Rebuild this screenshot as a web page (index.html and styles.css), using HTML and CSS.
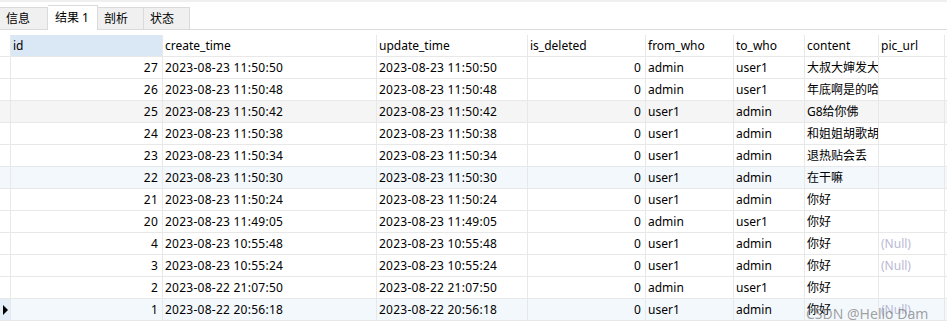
FILE: index.html
```html
<!DOCTYPE html>
<html lang="zh-CN">
<head>
  <meta charset="UTF-8" />
  <title>结果 1</title>
  <link rel="stylesheet" href="styles.css">
</head>
<body>

  <div class="top-strip"></div>

  <div class="tabs">
    <div class="tab">信息</div>
    <div class="tab active">结果 1</div>
    <div class="tab">剖析</div>
    <div class="tab">状态</div>
  </div>

  <div class="grid">
    <div class="row head">
      <div class="gutter"></div>
      <div class="cell sel">id</div>
      <div class="cell">create_time</div>
      <div class="cell">update_time</div>
      <div class="cell">is_deleted</div>
      <div class="cell">from_who</div>
      <div class="cell">to_who</div>
      <div class="cell">content</div>
      <div class="cell last">pic_url</div>
    </div>

    <div class="row">
      <div class="gutter"></div>
      <div class="cell num">27</div><div class="cell date">2023-08-23 11:50:50</div><div class="cell date">2023-08-23 11:50:50</div>
      <div class="cell num">0</div><div class="cell">admin</div><div class="cell">user1</div>
      <div class="cell">大叔大婶发大</div><div class="cell last"></div>
    </div>
    <div class="row">
      <div class="gutter"></div>
      <div class="cell num">26</div><div class="cell date">2023-08-23 11:50:48</div><div class="cell date">2023-08-23 11:50:48</div>
      <div class="cell num">0</div><div class="cell">admin</div><div class="cell">user1</div>
      <div class="cell">年底啊是的哈</div><div class="cell last"></div>
    </div>
    <div class="row grey">
      <div class="gutter"></div>
      <div class="cell num">25</div><div class="cell date">2023-08-23 11:50:42</div><div class="cell date">2023-08-23 11:50:42</div>
      <div class="cell num">0</div><div class="cell">user1</div><div class="cell">admin</div>
      <div class="cell">G8给你佛</div><div class="cell last"></div>
    </div>
    <div class="row">
      <div class="gutter"></div>
      <div class="cell num">24</div><div class="cell date">2023-08-23 11:50:38</div><div class="cell date">2023-08-23 11:50:38</div>
      <div class="cell num">0</div><div class="cell">user1</div><div class="cell">admin</div>
      <div class="cell">和姐姐胡歌胡</div><div class="cell last"></div>
    </div>
    <div class="row">
      <div class="gutter"></div>
      <div class="cell num">23</div><div class="cell date">2023-08-23 11:50:34</div><div class="cell date">2023-08-23 11:50:34</div>
      <div class="cell num">0</div><div class="cell">user1</div><div class="cell">admin</div>
      <div class="cell">退热贴会丢</div><div class="cell last"></div>
    </div>
    <div class="row blue">
      <div class="gutter"></div>
      <div class="cell num">22</div><div class="cell date">2023-08-23 11:50:30</div><div class="cell date">2023-08-23 11:50:30</div>
      <div class="cell num">0</div><div class="cell">user1</div><div class="cell">admin</div>
      <div class="cell">在干嘛</div><div class="cell last"></div>
    </div>
    <div class="row">
      <div class="gutter"></div>
      <div class="cell num">21</div><div class="cell date">2023-08-23 11:50:24</div><div class="cell date">2023-08-23 11:50:24</div>
      <div class="cell num">0</div><div class="cell">user1</div><div class="cell">admin</div>
      <div class="cell">你好</div><div class="cell last"></div>
    </div>
    <div class="row">
      <div class="gutter"></div>
      <div class="cell num">20</div><div class="cell date">2023-08-23 11:49:05</div><div class="cell date">2023-08-23 11:49:05</div>
      <div class="cell num">0</div><div class="cell">admin</div><div class="cell">user1</div>
      <div class="cell">你好</div><div class="cell last"></div>
    </div>
    <div class="row">
      <div class="gutter"></div>
      <div class="cell num">4</div><div class="cell date">2023-08-23 10:55:48</div><div class="cell date">2023-08-23 10:55:48</div>
      <div class="cell num">0</div><div class="cell">user1</div><div class="cell">admin</div>
      <div class="cell">你好</div><div class="cell last null">(Null)</div>
    </div>
    <div class="row">
      <div class="gutter"></div>
      <div class="cell num">3</div><div class="cell date">2023-08-23 10:55:24</div><div class="cell date">2023-08-23 10:55:24</div>
      <div class="cell num">0</div><div class="cell">user1</div><div class="cell">admin</div>
      <div class="cell">你好</div><div class="cell last null">(Null)</div>
    </div>
    <div class="row">
      <div class="gutter"></div>
      <div class="cell num">2</div><div class="cell date">2023-08-22 21:07:50</div><div class="cell date">2023-08-22 21:07:50</div>
      <div class="cell num">0</div><div class="cell">admin</div><div class="cell">user1</div>
      <div class="cell">你好</div><div class="cell last"></div>
    </div>
    <div class="row blue current">
      <div class="gutter"><span class="arrow"></span></div>
      <div class="cell num">1</div><div class="cell date">2023-08-22 20:56:18</div><div class="cell date">2023-08-22 20:56:18</div>
      <div class="cell num">0</div><div class="cell">user1</div><div class="cell">admin</div>
      <div class="cell">你好</div><div class="cell last null">(Null)</div>
    </div>

    <div class="watermark">CSDN @Hello Dam</div>
  </div>

</body>
</html>
```

FILE: styles.css
```css
body {
  margin: 0;
  background: #ffffff;
  font-family: 'Noto Sans', 'Noto Sans CJK SC', sans-serif;
  font-size: 12px;
  color: #000;
}

.top-strip {
  height: 2px;
  background: #efefef;
}

.tabs {
  display: flex;
  align-items: flex-end;
  height: 27px;
  border-bottom: 1px solid #dadada;
}

.tab {
  height: 22px;
  line-height: 22px;
  padding: 0 6px;
  width: 46px;
  box-sizing: border-box;
  background: #f0f0f0;
  border: 1px solid #dadada;
  border-bottom: none;
  border-left: none;
}

.tab:first-child {
  width: 48px;
}

.tab.active {
  width: 50px;
  height: 25px;
  line-height: 24px;
  margin-bottom: -1px;
  background: #ffffff;
  padding-left: 7px;
}

.grid {
  position: relative;
  margin-top: 5px;
}

.row {
  display: grid;
  grid-template-columns: 10px 152px 214px 151px 118px 88px 71px 74px 67px;
  height: 22px;
  border-bottom: 1px solid #e8e8e8;
  box-sizing: border-box;
}

.row.grey {
  background: #f5f5f5;
}

.row.blue {
  background: #f3f8fd;
}

.gutter {
  position: relative;
}

.row.current .gutter {
  background: #e4eef8;
}

.cell {
  border-left: 1px solid #e8e8e8;
  padding: 0 2px;
  line-height: 21px;
  white-space: nowrap;
  overflow: hidden;
}

.cell.last {
  border-right: 1px solid #e8e8e8;
}

.cell.sel {
  background: #dae8f5;
}

.cell.num {
  text-align: right;
  padding-right: 4px;
  letter-spacing: 0.2px;
}

.cell.date {
  letter-spacing: 0.25px;
}

.cell.null {
  color: #b9b9d3;
}

.arrow {
  position: absolute;
  left: 3px;
  top: 6px;
  width: 0;
  height: 0;
  border-top: 5px solid transparent;
  border-bottom: 5px solid transparent;
  border-left: 5px solid #000;
}

.watermark {
  position: absolute;
  left: 806px;
  top: 269px;
  font-size: 14px;
  color: rgba(110, 110, 110, 0.65);
}
```
